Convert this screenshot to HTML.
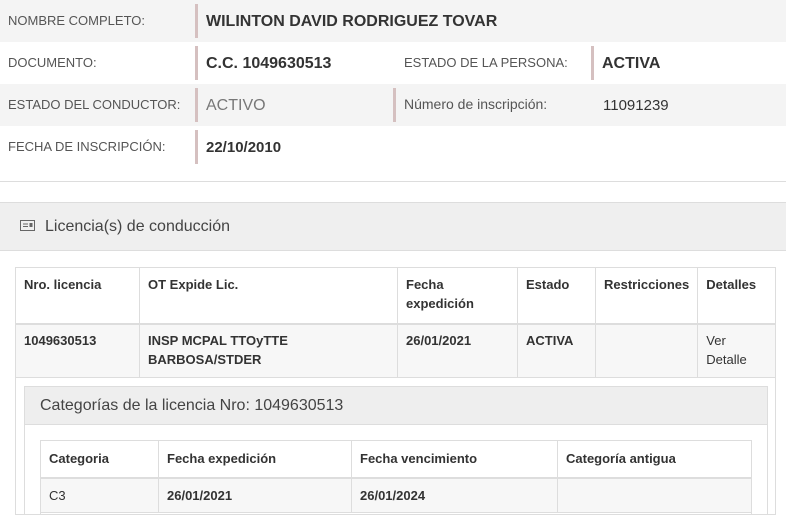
<!DOCTYPE html>
<html><head><meta charset="utf-8"><style>
*{margin:0;padding:0;box-sizing:border-box}
html,body{width:786px;height:515px;overflow:hidden}
body{background:#fff;font-family:"Liberation Sans",Arial,sans-serif;color:#333;position:relative}
.a{position:absolute}
.row{position:absolute;left:0;width:786px;height:42px}
.g{background:#f4f4f4}
.lbl{position:absolute;font-size:13px;color:#555;top:13px}
.val{position:absolute;font-size:16px;font-weight:bold;color:#333;top:13px}
.bar{position:absolute;width:3px;background:#d5c0c0;top:4px;height:34px}
table{border-collapse:collapse;position:absolute;font-size:13px;color:#333;line-height:19px}
td,th{border:1px solid #ddd;vertical-align:top;text-align:left;padding:6px 8px}
th{font-weight:bold}
</style></head><body>
<div class="row g" style="top:0"><div class="lbl" style="left:8px">NOMBRE COMPLETO:</div><div class="bar" style="left:195px"></div><div class="val" style="left:206px">WILINTON DAVID RODRIGUEZ TOVAR</div></div>
<div class="row" style="top:42px"><div class="lbl" style="left:8px">DOCUMENTO:</div><div class="bar" style="left:195px"></div><div class="val" style="left:206px">C.C. 1049630513</div><div class="lbl" style="left:404px">ESTADO DE LA PERSONA:</div><div class="bar" style="left:591px"></div><div class="val" style="left:602px">ACTIVA</div></div>
<div class="row g" style="top:84px"><div class="lbl" style="left:8px">ESTADO DEL CONDUCTOR:</div><div class="bar" style="left:195px"></div><div class="val" style="left:206px;font-weight:normal;color:#777">ACTIVO</div><div class="bar" style="left:393px"></div><div class="lbl" style="left:404px;font-size:14px;top:12px">Número de inscripción:</div><div class="val" style="left:603px;font-weight:normal;font-size:15px">11091239</div></div>
<div class="row" style="top:126px"><div class="lbl" style="left:8px">FECHA DE INSCRIPCIÓN:</div><div class="bar" style="left:195px"></div><div class="val" style="left:206px;font-size:15px">22/10/2010</div></div>
<div class="a" style="top:181px;left:0;width:786px;height:1px;background:#ddd"></div>
<div class="a" style="top:202px;left:0;width:786px;height:49px;background:#efefef;border-top:1px solid #ddd;border-bottom:1px solid #ddd"></div>
<svg class="a" style="left:20px;top:220px" width="15" height="11" viewBox="0 0 15 11"><rect x="0.5" y="0.5" width="14" height="10" fill="none" stroke="#666"/><line x1="3" y1="4" x2="8" y2="4" stroke="#666"/><line x1="3" y1="6.5" x2="8" y2="6.5" stroke="#666"/><rect x="9.5" y="3" width="3" height="4" fill="#666"/></svg>
<div class="a" style="left:45px;top:218px;font-size:16px;color:#444">Licencia(s) de conducción</div>
<table style="left:15px;top:267px;width:761px">
<tr style="height:56px"><th style="width:124px;border-bottom:2px solid #ddd;padding-top:7px">Nro. licencia</th><th style="width:258px;border-bottom:2px solid #ddd;padding-top:7px">OT Expide Lic.</th><th style="width:120px;border-bottom:2px solid #ddd;padding-top:7px">Fecha<br>expedición</th><th style="width:78px;border-bottom:2px solid #ddd;padding-top:7px">Estado</th><th style="width:102px;border-bottom:2px solid #ddd;padding-top:7px">Restricciones</th><th style="border-bottom:2px solid #ddd;padding-top:7px">Detalles</th></tr>
<tr style="height:54px;background:#f7f7f7"><th>1049630513</th><th>INSP MCPAL TTOyTTE<br>BARBOSA/STDER</th><th>26/01/2021</th><th>ACTIVA</th><td></td><td>Ver<br>Detalle</td></tr>
<tr style="height:137px"><td colspan="6"></td></tr>
</table>
<div class="a" style="left:24px;top:386px;width:744px;height:129px;border:1px solid #ddd;border-bottom:none"></div>
<div class="a" style="left:25px;top:387px;width:742px;height:38px;background:#eee;border-bottom:1px solid #ddd"></div>
<div class="a" style="left:40px;top:397px;font-size:16px;color:#444">Categorías de la licencia Nro: 1049630513</div>
<table style="left:40px;top:440px;width:712px">
<tr style="height:37px"><th style="width:118px;border-bottom:2px solid #ddd;padding-top:8px">Categoria</th><th style="width:193px;border-bottom:2px solid #ddd;padding-top:8px">Fecha expedición</th><th style="width:206px;border-bottom:2px solid #ddd;padding-top:8px">Fecha vencimiento</th><th style="border-bottom:2px solid #ddd;padding-top:8px">Categoría antigua</th></tr>
<tr style="height:35px;background:#f7f7f7"><td style="padding-top:7px">C3</td><th style="padding-top:7px">26/01/2021</th><th style="padding-top:7px">26/01/2024</th><td></td></tr>
</table>
<div class="a" style="left:40px;top:512px;width:712px;height:3px;border-left:1px solid #ddd;border-right:1px solid #ddd"></div>
</body></html>
